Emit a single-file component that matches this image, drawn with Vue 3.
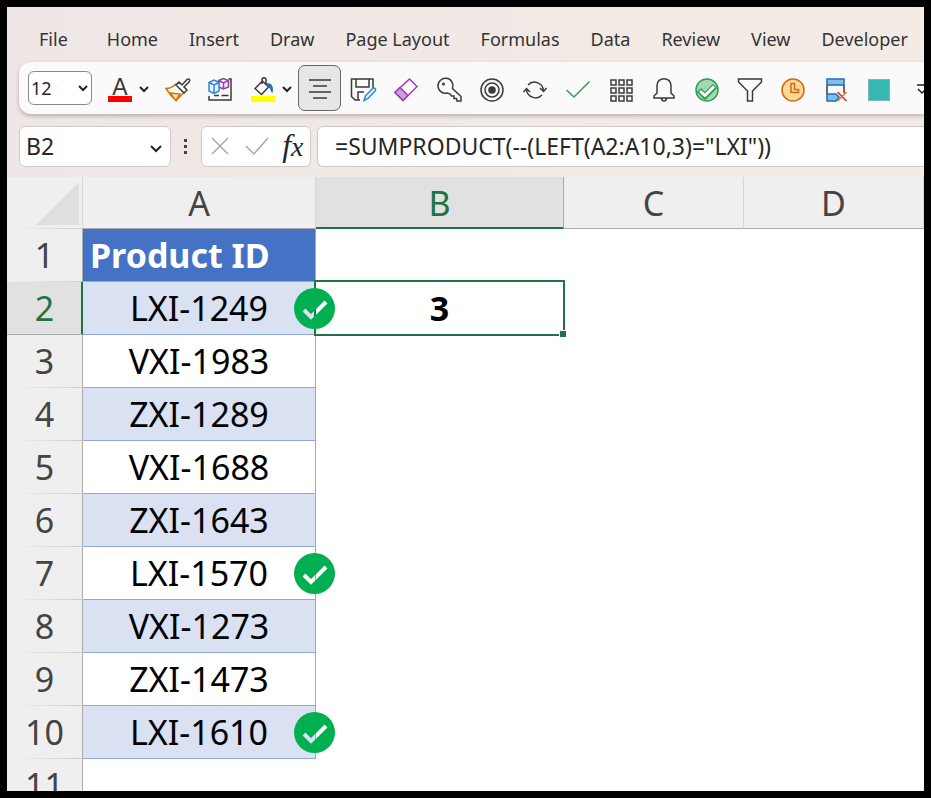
<script setup>
import { ref } from 'vue';

const tabs = ['File', 'Home', 'Insert', 'Draw', 'Page Layout', 'Formulas', 'Data', 'Review', 'View', 'Developer'];

const fontSize = ref('12');
const nameBox = ref('B2');
const formula = ref('=SUMPRODUCT(--(LEFT(A2:A10,3)="LXI"))');

const columns = ['A', 'B', 'C', 'D'];
const selected = { column: 'B', row: 2 };

// Sheet content, match marks the rows counted by the formula
const rows = ref([
  { nr: 1, id: 'Product ID', head: true },
  { nr: 2, id: 'LXI-1249', match: true },
  { nr: 3, id: 'VXI-1983' },
  { nr: 4, id: 'ZXI-1289' },
  { nr: 5, id: 'VXI-1688' },
  { nr: 6, id: 'ZXI-1643' },
  { nr: 7, id: 'LXI-1570', match: true },
  { nr: 8, id: 'VXI-1273' },
  { nr: 9, id: 'ZXI-1473' },
  { nr: 10, id: 'LXI-1610', match: true },
  { nr: 11, id: '' },
]);

const total = 3;
const squares = [4, 12, 20];
</script>

<template>
  <div class="window">
    <!-- Ribbon tabs -->
    <nav class="tabs">
      <a v-for="tab in tabs" :key="tab" href="#" class="tab">{{ tab }}</a>
    </nav>

    <!-- Quick access toolbar -->
    <div class="toolbar">
      <div class="size-box">
        <select v-model="fontSize" aria-label="Font size">
          <option>11</option>
          <option>12</option>
          <option>14</option>
        </select>
        <svg class="chevron" viewBox="0 0 12 12"><path d="M2 4l4 4 4-4" /></svg>
      </div>
      <button class="tool" aria-label="Font color">
        <svg viewBox="0 0 28 28">
          <text x="14" y="21" text-anchor="middle" class="letter">A</text>
          <rect x="2" y="22" width="24" height="6" fill="#ff0000" stroke="none" />
        </svg>
      </button>
      <button class="more" aria-label="Font color options">
        <svg class="chevron" viewBox="0 0 12 12"><path d="M2 5l4 4 4-4" /></svg>
      </button>
      <button class="tool" aria-label="Format painter">
        <svg viewBox="0 0 28 28">
          <path d="M3 14.500c4 0 7-1.500 10-4.500l8 8.500-8 8c-3.500-3-7-7-10-12z" stroke="#d4720c" fill="#fff" />
          <path d="M7.500 19l9.500 1-4 6.500c-2-2-4-4.500-5.500-7.500z" stroke="#d4720c" fill="#fcd9a4" />
          <path d="M13 11l3-3 3 3 4.500-5c2-2.500 4.500 0 2.500 2l-5 5 3 3-3 3z" fill="#fff" />
        </svg>
      </button>
      <button class="tool" aria-label="Shapes">
        <svg viewBox="0 0 28 28">
          <path d="M22.500 5h2.500v21h-22v-4M8 21.500h5M15.500 21.500h7" />
          <path d="M12.500 6.500l5-2 5 2v6.500l-5 2-5-2zM12.500 6.500l5 2.500 5-2.500M17.500 9v6" stroke="#9b3bb0" fill="#f6e8f8" />
          <path d="M3 8.500l5-2.500 5 2.500v8.500l-5 2.500-5-2.500zM3 8.500l5 2.500 5-2.500M8 11v8.500" stroke="#2b88d8" fill="#eaf4fc" />
        </svg>
      </button>
      <button class="tool" aria-label="Fill color">
        <svg viewBox="0 0 28 28">
          <path d="M13.500 7l-7.500 7.500 6.500 6 7-7.500-6-6M13 10V6c0-3 4-3 4 0v5" />
          <path d="M18 9c5 0 7 4 5.500 10-2-1-1.500-5-5-6.500z" fill="#1f6fc0" stroke="none" />
          <rect x="2" y="22" width="24" height="6" fill="#ffff00" stroke="none" />
        </svg>
      </button>
      <button class="more" aria-label="Fill color options">
        <svg class="chevron" viewBox="0 0 12 12"><path d="M2 5l4 4 4-4" /></svg>
      </button>
      <button class="tool active" aria-label="Center">
        <svg viewBox="0 0 28 28">
          <path d="M3 6h22M7 12h14M3 18h22M7 24h14" />
        </svg>
      </button>
      <button class="tool" aria-label="Save as">
        <svg viewBox="0 0 28 28">
          <path d="M11 26H6l-3.500-3.500V5H24v9M7 5v8h13V5M9 26v-8h6" />
          <path d="M15 26.500l1.500-4.500 7-7.500c2-1.500 4 .5 2.500 2.500l-7 7.500z" stroke="#2b88d8" fill="#eaf4fc" />
        </svg>
      </button>
      <button class="tool" aria-label="Clear">
        <svg viewBox="0 0 28 28">
          <path d="M17.500 5l7.500 7.500-14 14L3 18.500z" stroke="#9b3bb0" fill="#fff" />
          <path d="M8 13.500l8 8-5 5-8-8z" stroke="#9b3bb0" fill="#cf9fd8" />
        </svg>
      </button>
      <button class="tool" aria-label="Protect">
        <svg viewBox="0 0 28 28">
          <path d="M17.500 14.500a7.500 7.500 0 1 0-5 4.500l2.500 1 1.500 2H19v2.500h2.500L22 27h4v-4.500z" />
          <circle cx="8.500" cy="10" r="1.500" fill="#3b3a39" stroke="none" />
        </svg>
      </button>
      <button class="tool" aria-label="Record macro">
        <svg viewBox="0 0 28 28">
          <circle cx="14" cy="16" r="11" />
          <circle cx="14" cy="16" r="7" />
          <circle cx="14" cy="16" r="3" fill="#3b3a39" />
        </svg>
      </button>
      <button class="tool" aria-label="Refresh">
        <svg viewBox="0 0 28 28">
          <path d="M7 11a9 9 0 0 1 15.500 6M21 21a9 9 0 0 1-15.500-6M2.500 18l3-3.500L9 18M19 14l3.500 3.500L25.500 14" />
        </svg>
      </button>
      <button class="tool" aria-label="Accept">
        <svg viewBox="0 0 28 28"><path d="M2.500 16l7.500 7L25.500 7.500" stroke="#2f9e55" /></svg>
      </button>
      <button class="tool" aria-label="View grid">
        <svg viewBox="0 0 28 28">
          <template v-for="y in squares" :key="y">
            <rect v-for="x in squares" :key="x" :x="x" :y="y + 2" width="5" height="5" />
          </template>
        </svg>
      </button>
      <button class="tool" aria-label="Alerts">
        <svg viewBox="0 0 28 28">
          <path d="M4 24v-2l3-3v-7.500c0-9 14-9 14 0V19l3 3v2zM11.500 24c0 4 5 4 5 0" />
        </svg>
      </button>
      <button class="tool" aria-label="Check">
        <svg viewBox="0 0 28 28">
          <circle cx="14" cy="16" r="11" stroke="#2f9e55" fill="#a3d9b1" />
          <path d="M6 16l6 6L22 12" stroke="#2f9e55" stroke-width="6" />
          <path d="M7 17l5 4.500 9-9" stroke="#fff" stroke-width="3" />
        </svg>
      </button>
      <button class="tool" aria-label="Filter">
        <svg viewBox="0 0 28 28"><path d="M2.500 5h23v3l-9 9v10h-5V17l-9-9z" /></svg>
      </button>
      <button class="tool" aria-label="Recent">
        <svg viewBox="0 0 28 28">
          <circle cx="14" cy="16" r="11" stroke="#cf6a0a" fill="#fcd998" />
          <path d="M12 9.500h3.500v6h4v3H12z" stroke="#cf6a0a" fill="#fcd998" />
        </svg>
      </button>
      <button class="tool" aria-label="Delete rows">
        <svg viewBox="0 0 28 28">
          <path d="M5 11v9M22 11v8" />
          <path d="M5 5h17v6H5zM5 20h9l3 3-3 4H5z" stroke="#1a6fc0" fill="#83bdec" />
          <path d="M15.500 18l9 9" stroke="#ff1c0c" />
          <path d="M24.500 18l-9 9" stroke="#e8702a" />
        </svg>
      </button>
      <button class="tool" aria-label="Color">
        <svg viewBox="0 0 28 28"><rect x="3.500" y="5.500" width="21" height="21" fill="#35b8b0" stroke="#7fb4c8" stroke-width="1" /></svg>
      </button>
      <button class="tool" aria-label="Customize toolbar">
        <svg viewBox="0 0 28 28"><path d="M9 11h10M10 15l4 4 4-4" stroke="#222" /></svg>
      </button>
    </div>

    <!-- Name box and formula bar -->
    <div class="formula-row">
      <div class="name-box">
        <input v-model="nameBox" aria-label="Name box" />
        <svg class="chevron big" viewBox="0 0 12 12"><path d="M1 4l5 5 5-5" /></svg>
      </div>
      <svg class="dots" viewBox="0 0 4 18">
        <path d="M0 2h3v3H0zM0 8h3v3H0zM0 14h3v3H0z" />
      </svg>
      <div class="entry-buttons">
        <button aria-label="Cancel"><svg viewBox="0 0 24 24"><path d="M4 4l16 16M20 4L4 20" /></svg></button>
        <button aria-label="Enter"><svg viewBox="0 0 24 24"><path d="M1 12l8 8L23 4" /></svg></button>
        <button aria-label="Insert function" class="fx">f<span>x</span></button>
      </div>
      <input v-model="formula" class="formula" aria-label="Formula bar" />
    </div>

    <!-- Sheet -->
    <table>
      <colgroup>
        <col class="col-nr" />
        <col class="col-a" />
        <col class="col-b" />
        <col class="col-c" />
        <col />
      </colgroup>
      <thead>
        <tr>
          <th class="corner"><svg viewBox="0 0 43 43"><path d="M43 0v43H0z" /></svg></th>
          <th v-for="column in columns" :key="column" :class="{ selected: column === selected.column }">{{ column }}</th>
        </tr>
      </thead>
      <tbody>
        <tr v-for="row in rows" :key="row.nr">
          <th :class="{ selected: row.nr === selected.row }">{{ row.nr }}</th>
          <td :class="{ product: row.id, head: row.head, band: row.id && row.nr % 2 === 0 }">
            {{ row.id }}
            <svg v-if="row.match" class="badge" viewBox="0 0 41 41">
              <mask :id="'tick-' + row.nr">
                <rect width="41" height="41" fill="#fff" />
                <path d="M10 22l7 7 15-15" fill="none" stroke="#000" stroke-width="4" />
              </mask>
              <circle cx="20.500" cy="20.500" r="20.500" fill="#00b050" :mask="'url(#tick-' + row.nr + ')'" />
            </svg>
          </td>
          <td :class="{ current: row.nr === selected.row }">{{ row.nr === selected.row ? total : '' }}</td>
          <td></td>
          <td></td>
        </tr>
      </tbody>
    </table>
  </div>
</template>

<style>
body {
  margin: 0;
  background: #000;
}
</style>

<style scoped>
.window {
  box-sizing: border-box;
  height: 100vh;
  border: 7px solid #000;
  overflow: hidden;
  background: #fff linear-gradient(90deg, #efe7e6, #f4ebe5) no-repeat;
  background-size: 100% 170px;
  font-family: "Noto Sans", "Open Sans", sans-serif;
  color: #262626;
}

button {
  padding: 0;
  border: none;
  background: none;
  cursor: pointer;
}

svg {
  display: block;
  fill: none;
  stroke: #3b3a39;
  stroke-width: 1.5;
}

/* Ribbon tabs */
.tabs {
  display: flex;
  gap: 31px;
  height: 55px;
  padding-left: 32px;
  align-items: center;
  box-sizing: border-box;
  padding-top: 9px;
}

.tab {
  color: #333;
  font-size: 18px;
  text-decoration: none;
  white-space: nowrap;
}

.tab:first-child {
  margin-right: 8px;
}

/* Toolbar */
.toolbar {
  display: flex;
  align-items: center;
  height: 52px;
  margin-left: 12px;
  padding-left: 9px;
  border-radius: 12px 0 0 12px;
  background: #fafafa;
  box-shadow: 0 2px 4px rgba(0, 0, 0, 0.25);
}

.size-box {
  position: relative;
  flex: none;
  width: 64px;
  margin-right: 6px;
}

.size-box select {
  display: block;
  width: 100%;
  height: 34px;
  padding: 0 2px;
  border: 1px solid #8a8a8a;
  border-radius: 6px;
  background: #fff;
  appearance: none;
  font: 18px "Noto Sans", sans-serif;
  color: #262626;
}

.chevron {
  width: 12px;
  height: 12px;
  stroke: #222;
  stroke-width: 2;
}

.size-box .chevron {
  position: absolute;
  right: 3px;
  top: 11px;
}

.tool {
  display: flex;
  flex: none;
  justify-content: center;
  align-items: center;
  box-sizing: border-box;
  width: 43px;
  height: 46px;
}

.tool svg {
  width: 28px;
  height: 28px;
}

.tool.active {
  border: 1px solid #666;
  border-radius: 7px;
  background: #e6e6e6;
}

.letter {
  fill: #3b3a39;
  stroke: none;
  font-size: 23px;
}

.more {
  flex: none;
  width: 14px;
  margin: 0 3px 0 -3px;
}

/* Formula row */
.formula-row {
  display: flex;
  align-items: center;
  height: 40px;
  padding: 12px 0 11px 12px;
}

.name-box,
.entry-buttons,
.formula {
  box-sizing: border-box;
  height: 41px;
  border: 1px solid #cfcac9;
  border-radius: 6px;
  background: #fff;
}

.name-box {
  position: relative;
  flex: none;
  width: 152px;
}

input {
  box-sizing: border-box;
  outline: none;
  font: 23px "Noto Sans", sans-serif;
  color: #262626;
}

.name-box input {
  width: 120px;
  height: 100%;
  padding: 0 6px;
  border: none;
  background: none;
}

.big {
  position: absolute;
  right: 8px;
  top: 15px;
}

.dots {
  flex: none;
  width: 4px;
  height: 18px;
  margin: 0 13px;
  fill: #444;
  stroke: none;
}

.entry-buttons {
  display: flex;
  flex: none;
  align-items: center;
  justify-content: space-around;
  width: 110px;
  margin-right: 6px;
}

.entry-buttons svg {
  width: 24px;
  height: 24px;
  stroke: #a8a8a8;
}

.fx {
  font: italic 32px/36px "Liberation Serif", serif;
  color: #262626;
}

.fx span {
  font-size: 28px;
}

.formula {
  flex: 1;
  min-width: 0;
  padding: 0 17px;
  border-right: none;
  border-radius: 6px 0 0 6px;
}

/* Sheet */
table {
  width: 100%;
  table-layout: fixed;
  border-collapse: separate;
  border-spacing: 0;
  background: #fff;
}

.col-nr {
  width: 76px;
}

.col-a {
  width: 233px;
}

.col-b {
  width: 248px;
}

.col-c {
  width: 180px;
}

th,
td {
  position: relative;
  box-sizing: border-box;
  height: 53px;
  padding: 0;
  border: solid transparent;
  border-width: 0 1px 1px 0;
  font-size: 34px;
  font-weight: 400;
  line-height: 40px;
  text-align: center;
}

th {
  background: #efefef;
  color: #444;
}

thead th {
  height: 52px;
  border-right-color: #d6d6d6;
  border-bottom-color: #ababab;
}

/* Row lines fade out towards the window edge */
tbody th,
thead th.corner {
  border-right-color: #ababab;
  background: #efefef linear-gradient(90deg, #efefef 10%, #cfcdc8) bottom / 100% 1px no-repeat border-box;
}

thead th.corner {
  border-right-color: #d6d6d6;
  border-bottom-color: transparent;
}

tbody th.selected,
thead th.selected {
  background: #e1e1e1;
  border-color: #ababab;
  color: #217346;
}

thead th.selected {
  border-bottom-color: #217346;
  box-shadow: inset 0 -1px #217346;
}

tbody th.selected {
  border-right-color: #217346;
  box-shadow: inset -1px 0 #217346;
}

.corner svg {
  width: 43px;
  height: 43px;
  margin: 1px 3px 0 auto;
  fill: #dfdfdf;
  stroke: none;
}

td {
  color: #000;
}

.product {
  border-color: #8ea9db;
}

.band {
  background: #d9e1f2;
}

.head {
  padding-left: 7px;
  background: #4472c4;
  color: #fff;
  font-weight: 700;
  text-align: left;
}

.badge {
  position: absolute;
  z-index: 2;
  right: -20px;
  top: 6px;
  width: 41px;
  height: 41px;
  stroke: none;
}

/* Selection frame with its fill handle */
.current {
  font-weight: 700;
}

.current::before {
  content: "";
  position: absolute;
  z-index: 1;
  inset: -2px;
  border: 2px solid #217346;
}

.current::after {
  content: "";
  position: absolute;
  z-index: 1;
  right: -3px;
  bottom: -3px;
  width: 6px;
  height: 6px;
  border: solid #fff;
  border-width: 1px 0 0 1px;
  background: #217346;
}
</style>
